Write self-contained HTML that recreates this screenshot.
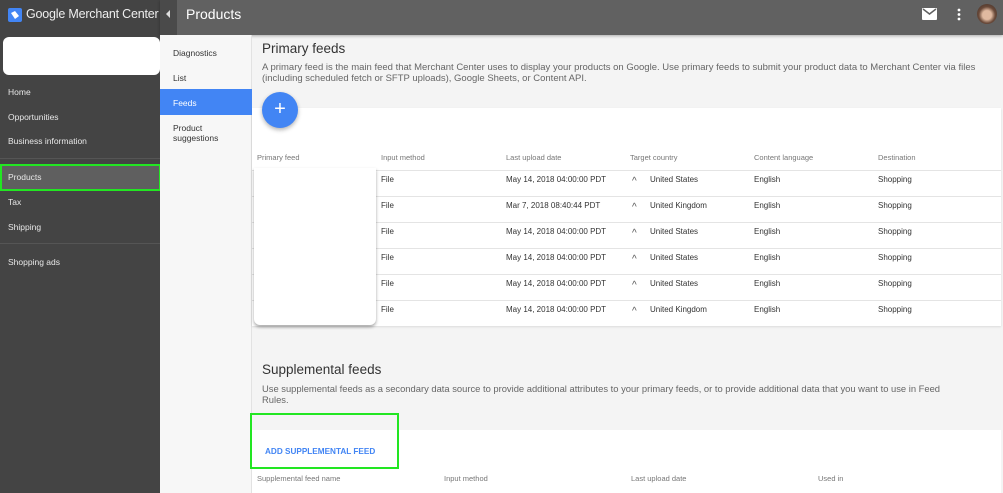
<!DOCTYPE html>
<html><head><meta charset="utf-8"><style>
*{box-sizing:border-box;margin:0;padding:0}
body{width:1003px;height:493px;overflow:hidden;position:relative;font-family:"Liberation Sans",sans-serif;background:#f4f4f4;color:#333}
.a{position:absolute;white-space:nowrap}
.side{position:absolute;left:0;top:0;width:160px;height:493px;background:#444}
.top{position:absolute;left:160px;top:0;width:843px;height:35px;background:#616161;box-shadow:0 1px 3px rgba(0,0,0,.3)}
.nav2{position:absolute;left:160px;top:35px;width:92px;height:458px;background:#f7f7f7;border-right:1px solid #e2e2e2}
.sl{position:absolute;left:8px;font-size:8.5px;color:#e8e8e8}
.n2{position:absolute;left:173px;font-size:8.5px;color:#333}
.th{font-size:7.5px;color:#777}
.td{font-size:8px;color:#333}
.row{position:absolute;left:252px;width:749px;height:26px;border-top:1px solid #e4e4e4}
</style></head><body>
<div class="side"></div>
<svg class="a" style="left:8px;top:8px" width="14" height="14"><rect width="14" height="14" rx="2" fill="#4285f4"/><path d="M3 5l4-2 4 5-4 3z" fill="#fff"/></svg>
<div class="a" style="left:26px;top:7px;font-size:12.5px;color:#eee;letter-spacing:-0.2px">Google Merchant Center</div>
<div class="top"></div>
<div class="a" style="left:160px;top:0;width:17px;height:35px;background:#4a4a4a"></div>
<div class="a" style="left:166px;top:10px;width:0;height:0;border-top:4px solid transparent;border-bottom:4px solid transparent;border-right:4px solid #ddd"></div>
<div class="a" style="left:186px;top:6px;font-size:14px;color:#fff">Products</div>
<svg class="a" style="left:922px;top:8px" width="15" height="12"><rect width="15" height="12" rx="1" fill="#fff"/><path d="M1 1l6.5 5 6.5-5" stroke="#616161" stroke-width="1.5" fill="none"/></svg>
<svg class="a" style="left:957px;top:8px" width="4" height="13"><circle cx="2" cy="2" r="1.4" fill="#fff"/><circle cx="2" cy="6.5" r="1.4" fill="#fff"/><circle cx="2" cy="11" r="1.4" fill="#fff"/></svg>
<div class="a" style="left:977px;top:4px;width:20px;height:20px;border-radius:50%;background:radial-gradient(circle at 50% 55%,#e0b9a0 0 30%,#6a4a3a 55%,#3a2a22)"></div>
<div class="a" style="left:3px;top:37px;width:157px;height:38px;background:#fff;border-radius:6px"></div>
<div class="sl" style="top:87px">Home</div>
<div class="sl" style="top:112px">Opportunities</div>
<div class="sl" style="top:136px">Business information</div>
<div class="a" style="left:0;top:158px;width:160px;height:1px;background:#555"></div>
<div class="a" style="left:0;top:164px;width:161px;height:27px;background:#5f5f5f;border:2px solid #22e622"></div>
<div class="sl" style="top:172px">Products</div>
<div class="sl" style="top:197px">Tax</div>
<div class="sl" style="top:222px">Shipping</div>
<div class="a" style="left:0;top:243px;width:160px;height:1px;background:#555"></div>
<div class="sl" style="top:257px">Shopping ads</div>
<div class="nav2"></div>
<div class="n2" style="top:48px">Diagnostics</div>
<div class="n2" style="top:73px">List</div>
<div class="a" style="left:160px;top:89px;width:92px;height:26px;background:#4285f4"></div>
<div class="n2" style="top:98px;color:#fff">Feeds</div>
<div class="n2" style="top:123px;line-height:10px">Product<br>suggestions</div>
<div class="a" style="left:262px;top:41px;font-size:13.5px;color:#333">Primary feeds</div>
<div class="a" style="left:262px;top:62px;font-size:9.5px;color:#666;line-height:11px">A primary feed is the main feed that Merchant Center uses to display your products on Google. Use primary feeds to submit your product data to Merchant Center via files<br>(including scheduled fetch or SFTP uploads), Google Sheets, or Content API.</div>
<div class="a" style="left:252px;top:108px;width:749px;height:218px;background:#fff;box-shadow:0 1px 2px rgba(0,0,0,.1)"></div>
<div class="a" style="left:262px;top:92px;width:36px;height:36px;border-radius:50%;background:#4285f4;box-shadow:0 2px 4px rgba(0,0,0,.3);color:#fff;font-size:20px;text-align:center;line-height:34px">+</div>
<div class="a th" style="left:257px;top:153px">Primary feed</div>
<div class="a th" style="left:381px;top:153px">Input method</div>
<div class="a th" style="left:506px;top:153px">Last upload date</div>
<div class="a th" style="left:630px;top:153px">Target country</div>
<div class="a th" style="left:754px;top:153px">Content language</div>
<div class="a th" style="left:878px;top:153px">Destination</div>
<div class="row" style="top:170px"></div><div class="row" style="top:196px"></div><div class="row" style="top:222px"></div><div class="row" style="top:248px"></div><div class="row" style="top:274px"></div><div class="row" style="top:300px"></div>
<div class="a td" style="left:381px;top:167px;line-height:26px">File<br>File<br>File<br>File<br>File<br>File</div>
<div class="a td" style="left:506px;top:167px;line-height:26px">May 14, 2018 04:00:00 PDT<br>Mar 7, 2018 08:40:44 PDT<br>May 14, 2018 04:00:00 PDT<br>May 14, 2018 04:00:00 PDT<br>May 14, 2018 04:00:00 PDT<br>May 14, 2018 04:00:00 PDT</div>
<div class="a" style="left:632px;top:169px;line-height:26px;font-size:10px;color:#555">^<br>^<br>^<br>^<br>^<br>^</div>
<div class="a td" style="left:650px;top:167px;line-height:26px">United States<br>United Kingdom<br>United States<br>United States<br>United States<br>United Kingdom</div>
<div class="a td" style="left:754px;top:167px;line-height:26px">English<br>English<br>English<br>English<br>English<br>English</div>
<div class="a td" style="left:878px;top:167px;line-height:26px">Shopping<br>Shopping<br>Shopping<br>Shopping<br>Shopping<br>Shopping</div>
<div class="a" style="left:254px;top:168px;width:122px;height:157px;background:#fff;border-radius:0 0 6px 6px;box-shadow:0 2px 3px rgba(0,0,0,.35)"></div>
<div class="a" style="left:262px;top:362px;font-size:13.5px;color:#333">Supplemental feeds</div>
<div class="a" style="left:262px;top:383px;font-size:9.4px;color:#666;line-height:11px">Use supplemental feeds as a secondary data source to provide additional attributes to your primary feeds, or to provide additional data that you want to use in Feed<br>Rules.</div>
<div class="a" style="left:252px;top:430px;width:749px;height:63px;background:#fff"></div>
<div class="a" style="left:250px;top:413px;width:149px;height:56px;border:2px solid #22e622"></div>
<div class="a" style="left:265px;top:447px;font-size:8.2px;color:#4285f4;font-weight:bold">ADD SUPPLEMENTAL FEED</div>
<div class="a th" style="left:257px;top:474px">Supplemental feed name</div>
<div class="a th" style="left:444px;top:474px">Input method</div>
<div class="a th" style="left:631px;top:474px">Last upload date</div>
<div class="a th" style="left:818px;top:474px">Used in</div>
</body></html>
